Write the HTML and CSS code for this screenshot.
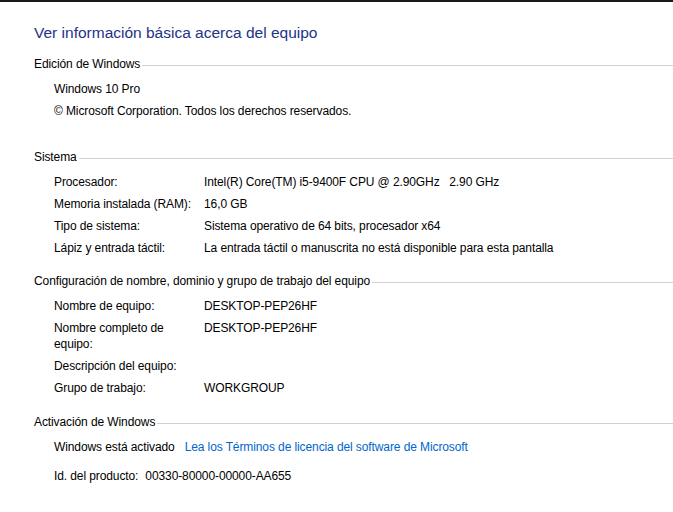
FILE: index.html
```html
<!DOCTYPE html>
<html>
<head>
    <title>Sistema</title>
    <link rel="stylesheet" href="styles.css">
</head>
<body>
    <div class="page">
        <h1>Ver información básica acerca del equipo</h1>

        <div class="section first">
            <div class="section-title"><span>Edición de Windows</span></div>
            <div class="row">Windows 10 Pro</div>
            <div class="row">© Microsoft Corporation. Todos los derechos reservados.</div>
        </div>

        <div class="section system">
            <div class="section-title"><span>Sistema</span></div>
            <div class="row"><div class="label">Procesador:</div><div class="value">Intel(R) Core(TM) i5-9400F CPU @ 2.90GHz&nbsp;&nbsp; 2.90 GHz</div></div>
            <div class="row"><div class="label">Memoria instalada (RAM):</div><div class="value">16,0 GB</div></div>
            <div class="row"><div class="label">Tipo de sistema:</div><div class="value">Sistema operativo de 64 bits, procesador x64</div></div>
            <div class="row"><div class="label">Lápiz y entrada táctil:</div><div class="value">La entrada táctil o manuscrita no está disponible para esta pantalla</div></div>
        </div>

        <div class="section">
            <div class="section-title"><span>Configuración de nombre, dominio y grupo de trabajo del equipo</span></div>
            <div class="row"><div class="label">Nombre de equipo:</div><div class="value">DESKTOP-PEP26HF</div></div>
            <div class="row"><div class="label">Nombre completo de equipo:</div><div class="value">DESKTOP-PEP26HF</div></div>
            <div class="row"><div class="label">Descripción del equipo:</div><div class="value"></div></div>
            <div class="row"><div class="label">Grupo de trabajo:</div><div class="value">WORKGROUP</div></div>
        </div>

        <div class="section">
            <div class="section-title"><span>Activación de Windows</span></div>
            <div class="row inline"><span>Windows está activado</span><a href="#" class="link">Lea los Términos de licencia del software de Microsoft</a></div>
            <div class="row inline product"><span>Id. del producto:</span><span>00330-80000-00000-AA655</span></div>
        </div>
    </div>
</body>
</html>
```

FILE: styles.css
```css
body {
    margin: 0;
    background: #fff;
    font-family: "Liberation Sans", Arial, sans-serif;
    font-size: 12px;
    line-height: 16px;
    color: #000;
}

.page {
    border-top: 2px solid #1a1a1a;
    padding-left: 34px;
    height: 510px;
    overflow: hidden;
    letter-spacing: -0.1px;
}

h1 {
    margin: 21px 0 13px 0;
    font-size: 15.5px;
    line-height: 20px;
    font-weight: normal;
    color: #1e3287;
    letter-spacing: 0;
}

.section {
    margin-bottom: 18px;
}

    .section.first {
        margin-bottom: 30px;
    }

    .section.system {
        margin-bottom: 17px;
    }

.section-title {
    display: flex;
    align-items: center;
    margin-bottom: 9px;
}

    .section-title::after {
        content: "";
        flex: 1;
        height: 1px;
        margin-left: 2px;
        margin-top: 3px;
        background: #d0d0d0;
    }

.row {
    display: flex;
    padding-left: 20px;
    margin-bottom: 6px;
}

.label {
    width: 140px;
    margin-right: 10px;
    flex-shrink: 0;
}

.row.inline {
    gap: 10px;
}

.row.product {
    gap: 7px;
    margin-top: 13px;
}

.link {
    color: #0066cc;
    text-decoration: none;
}
```
